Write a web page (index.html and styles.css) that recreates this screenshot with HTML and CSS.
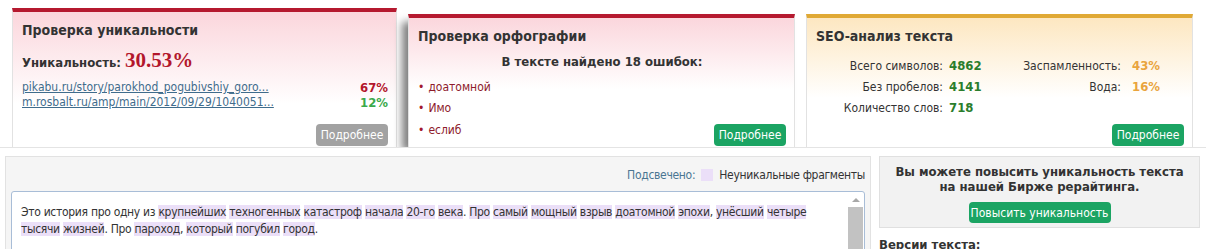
FILE: index.html
```html
<!DOCTYPE html>
<html lang="ru">
<head>
  <meta charset="UTF-8">
  <title>Проверка текста</title>
  <link rel="stylesheet" href="styles.css">
</head>
<body>
  <div class="results">
    <!-- Uniqueness -->
    <div class="card card-unique">
      <h2>Проверка уникальности</h2>
      <div class="uniq">Уникальность: <span class="uniq-value">30.53%</span></div>
      <ul class="sources">
        <li><a href="#">pikabu.ru/story/parokhod_pogubivshiy_goro...</a><span class="pct bad">67%</span></li>
        <li><a href="#">m.rosbalt.ru/amp/main/2012/09/29/1040051...</a><span class="pct good">12%</span></li>
      </ul>
      <div class="card-foot"><button class="btn btn-gray">Подробнее</button></div>
    </div>

    <!-- Spelling -->
    <div class="card card-spell">
      <h2>Проверка орфографии</h2>
      <div class="spell-count">В тексте найдено 18 ошибок:</div>
      <div class="spell-body">
        <ul class="errors">
          <li>доатомной</li>
          <li>Имо</li>
          <li>еслиб</li>
        </ul>
        <button class="btn btn-green">Подробнее</button>
      </div>
    </div>

    <!-- SEO -->
    <div class="card card-seo">
      <h2>SEO-анализ текста</h2>
      <div class="seo-grid">
        <span class="lbl">Всего символов:</span><span class="val">4862</span>
        <span class="lbl">Заспамленность:</span><span class="val warn">43%</span>
        <span class="lbl">Без пробелов:</span><span class="val">4141</span>
        <span class="lbl">Вода:</span><span class="val warn">16%</span>
        <span class="lbl">Количество слов:</span><span class="val">718</span>
      </div>
      <div class="card-foot"><button class="btn btn-green">Подробнее</button></div>
    </div>
  </div>

  <div class="workspace">
    <div class="text-panel">
      <div class="legend">
        <span class="legend-label">Подсвечено:</span>
        <span class="legend-box"></span>
        <span>Неуникальные фрагменты</span>
      </div>
      <div class="text-box">
        <p>Это история про одну из <mark>крупнейших</mark> <mark>техногенных</mark> <mark>катастроф</mark> <mark>начала</mark> <mark>20-го</mark> <mark>века</mark>. <mark>Про</mark> <mark>самый</mark> <mark>мощный</mark> <mark>взрыв</mark> <mark>доатомной</mark> <mark>эпохи</mark>, <mark>унёсший</mark> <mark>четыре</mark> <mark>тысячи</mark> <mark>жизней</mark>. Про <mark>пароход</mark>, <mark>который</mark> <mark>погубил</mark> <mark>город</mark>.</p>
        <div class="scrollbar">
          <span class="arrow"></span>
          <span class="thumb"></span>
        </div>
      </div>
    </div>

    <div class="side">
      <div class="promo">
        <p>Вы можете повысить уникальность текста на нашей Бирже рерайтинга.</p>
        <button class="btn btn-green btn-wide">Повысить уникальность</button>
      </div>
      <h3>Версии текста:</h3>
    </div>
  </div>
</body>
</html>
```

FILE: styles.css
```css
* {
  margin: 0;
  padding: 0;
  box-sizing: border-box;
}

body {
  font-family: 'DejaVu Sans Condensed', 'DejaVu Sans', sans-serif;
  font-size: 12px;
  color: #333;
  background: #fff;
  width: 1206px;
  height: 249px;
  overflow: hidden;
}

/* Result cards */
.results {
  display: flex;
  align-items: flex-end;
  gap: 11px;
  padding: 8px 0 0 12px;
  height: 148px;
  border-bottom: 1px solid #e4e4e4;
  overflow: hidden;
}

.card {
  position: relative;
  display: flex;
  flex-direction: column;
  height: 133px;
  padding: 9px 8px 0 9px;
  border: 1px solid #e2e2e2;
  border-bottom: none;
  border-top: 4px solid #b5192f;
}

.card h2 {
  font-size: 14px;
  font-weight: bold;
  color: #333;
  line-height: 18px;
}

.card-unique {
  width: 385px;
  height: 139px;
  background: linear-gradient(180deg, #fbd6dc 0%, #fff 68%);
}

.card-spell {
  width: 387px;
  background: linear-gradient(180deg, #fbd6dc 0%, #fff 55%);
  box-shadow: -8px 6px 8px -2px rgba(0, 0, 0, 0.5);
}

.card-seo {
  width: 387px;
  border-top-color: #e0a935;
  background: linear-gradient(180deg, #fde7c1 0%, #fff 62%);
}

.card-foot {
  margin-top: auto;
  display: flex;
  justify-content: flex-end;
  padding-bottom: 1px;
}

.btn {
  font-family: inherit;
  font-size: 12px;
  color: #fff;
  border: none;
  border-radius: 4px;
  height: 22px;
  width: 72px;
  cursor: pointer;
}

.btn-gray {
  background: #a2a2a2;
}

.btn-green {
  background: #1ba463;
}

/* Uniqueness */
.uniq {
  margin-top: 9px;
  font-size: 13px;
  font-weight: bold;
}

.uniq-value {
  font-family: 'Liberation Serif', serif;
  font-size: 21px;
  color: #b3172c;
}

.sources {
  list-style: none;
  margin-top: 7px;
}

.sources li {
  display: flex;
  justify-content: space-between;
  line-height: 15px;
}

.sources a {
  color: #3f6c8c;
}

.pct {
  font-size: 13px;
  font-weight: bold;
}

.pct.bad {
  color: #b3172c;
}

.pct.good {
  color: #3aa94b;
}

/* Spelling */
.spell-count {
  margin-top: 8px;
  text-align: center;
  font-size: 13px;
  font-weight: bold;
  line-height: 17px;
}

.spell-body {
  display: flex;
  justify-content: space-between;
  align-items: flex-end;
  margin-top: auto;
  padding-bottom: 1px;
}

.errors {
  list-style: none;
  color: #8e1b2c;
  padding-bottom: 5px;
}

.errors li {
  line-height: 21.5px;
}

.errors li::before {
  content: '•';
  margin-right: 4px;
  color: #a3192e;
}

/* SEO */
.seo-grid {
  display: grid;
  grid-template-columns: 127px 60px 106px auto;
  column-gap: 6px;
  row-gap: 4px;
  margin-top: 13px;
  align-items: baseline;
}

.seo-grid .lbl {
  text-align: right;
  line-height: 17px;
}

.seo-grid .val {
  font-size: 13px;
  font-weight: bold;
  color: #2a7d2c;
}

.seo-grid .val.warn {
  color: #e9a43d;
  margin-left: 5px;
}

/* Bottom workspace */
.workspace {
  display: flex;
  gap: 8px;
  padding: 8px 6px 0 5px;
}

.text-panel {
  width: 866px;
  height: 100px;
  background: #f5f5f5;
  border: 1px solid #e2e2e2;
  padding: 0 5px;
}

.legend {
  display: flex;
  justify-content: flex-end;
  align-items: center;
  gap: 6px;
  height: 34px;
  padding-right: 0;
  padding-top: 1px;
  letter-spacing: -0.3px;
}

.legend-label {
  color: #4a7592;
}

.legend-box {
  width: 12px;
  height: 12px;
  background: #ebdff8;
}

.text-box {
  display: flex;
  background: #fff;
  border: 1px solid #a8bdd7;
  border-radius: 3px;
  height: 70px;
  padding: 12px 0 0 9px;
}

.text-box p {
  flex: 1;
  line-height: 17px;
  letter-spacing: -0.3px;
  padding-right: 14px;
}

.text-box mark {
  background: #ebdff8;
  color: inherit;
}

.scrollbar {
  display: flex;
  flex-direction: column;
  align-items: center;
  width: 17px;
  margin-top: -11px;
  gap: 5px;
  padding-top: 5px;
}

.arrow {
  width: 0;
  height: 0;
  border-left: 4px solid transparent;
  border-right: 4px solid transparent;
  border-bottom: 4px solid #a8a8a8;
}

.thumb {
  width: 15px;
  flex: 1;
  background: #c2c2c2;
}

.side {
  flex: 1;
}

.promo {
  background: #f2f2f2;
  border: 1px solid #e0e0e0;
  text-align: center;
  height: 72px;
  padding-top: 7px;
}

.promo p {
  font-size: 13px;
  font-weight: bold;
  line-height: 15px;
  padding: 0 10px;
}

.btn-wide {
  width: 142px;
  height: 21px;
  margin-top: 8px;
}

.side h3 {
  font-size: 13px;
  font-weight: bold;
  margin-top: 9px;
}
```
